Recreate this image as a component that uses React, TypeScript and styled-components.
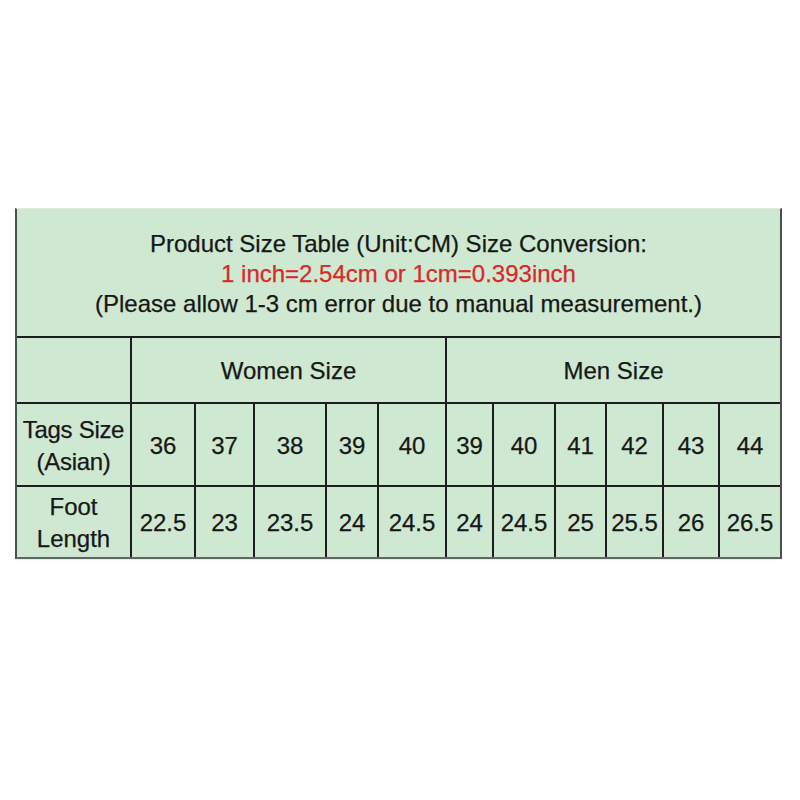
import styled, { createGlobalStyle } from 'styled-components';

const GlobalStyle = createGlobalStyle`
  html, body {
    margin: 0;
    padding: 0;
    background: #ffffff;
  }
  body {
    font-family: 'Liberation Sans', Arial, sans-serif;
  }
`;

const womenSizes = [
  { tag: '36', foot: '22.5' },
  { tag: '37', foot: '23' },
  { tag: '38', foot: '23.5' },
  { tag: '39', foot: '24' },
  { tag: '40', foot: '24.5' },
];

const menSizes = [
  { tag: '39', foot: '24' },
  { tag: '40', foot: '24.5' },
  { tag: '41', foot: '25' },
  { tag: '42', foot: '25.5' },
  { tag: '43', foot: '26' },
  { tag: '44', foot: '26.5' },
];

const App = () => {
  const allSizes = [...womenSizes, ...menSizes];

  return (
    <Page>
      <GlobalStyle />
      <SizeTable>
        <TitleCell>
          <TitleLine>Product Size Table (Unit:CM) Size Conversion:</TitleLine>
          <TitleLine $red>1 inch=2.54cm or 1cm=0.393inch</TitleLine>
          <TitleLine>(Please allow 1-3 cm error due to manual measurement.)</TitleLine>
        </TitleCell>

        <Cell />
        <Cell $span={5}>Women Size</Cell>
        <Cell $span={6}>Men Size</Cell>

        <Cell $tight>
          Tags Size
          <br />
          (Asian)
        </Cell>
        {allSizes.map((item, index) => (
          <Cell key={`tag_${index}`}>{item.tag}</Cell>
        ))}

        <Cell>
          Foot
          <br />
          Length
        </Cell>
        {allSizes.map((item, index) => (
          <Cell key={`foot_${index}`}>{item.foot}</Cell>
        ))}
      </SizeTable>
    </Page>
  );
};

const Page = styled.div`
  width: 800px;
  height: 800px;
  padding: 208px 0 0 15px;
  box-sizing: border-box;
  background: #ffffff;
`;

const SizeTable = styled.div`
  display: grid;
  width: 763px;
  grid-template-columns: 113px 62px 57px 70px 50px 66px 45px 60px 49px 55px 54px 60px;
  grid-template-rows: 127px 64px 81px 70px;
  gap: 2px;
  background-color: #1c1f1d;
  border-top: 1px solid #dfeadf;
  border-left: 2px solid #46524c;
  border-right: 2px solid #46524c;
  border-bottom: 2px solid #5d6862;
  box-shadow: 0 1px 1px rgba(0, 0, 0, 0.08);
`;

const Cell = styled.div<{ $span?: number; $tight?: boolean }>`
  grid-column: span ${(p) => p.$span ?? 1};
  display: flex;
  align-items: center;
  justify-content: center;
  text-align: center;
  background-color: #cfe8d2;
  color: #161816;
  font-size: 24px;
  line-height: 32px;
  padding-top: 2px;
  white-space: nowrap;
  letter-spacing: ${(p) => (p.$tight ? '-0.3px' : '0')};
  -webkit-text-stroke: 0.25px #161816;
`;

const TitleCell = styled.div`
  grid-column: 1 / -1;
  display: flex;
  flex-direction: column;
  align-items: center;
  justify-content: center;
  background-color: #cfe8d2;
  padding-top: 2px;
`;

const TitleLine = styled.div<{ $red?: boolean }>`
  font-size: 24px;
  line-height: 30px;
  color: ${(p) => (p.$red ? '#d8282a' : '#161816')};
  -webkit-text-stroke: 0.25px ${(p) => (p.$red ? '#d8282a' : '#161816')};
  white-space: nowrap;
`;

export default App;
